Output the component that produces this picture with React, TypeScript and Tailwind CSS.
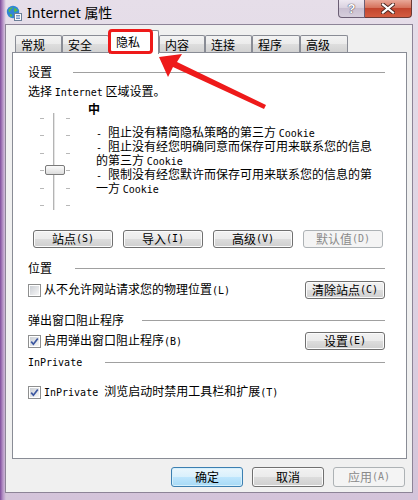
import type { ReactNode } from "react";

const cjk = "font-['Noto_Sans_CJK_SC',sans-serif]";

function M({ children }: { children: ReactNode }) {
  return <span className="font-['DejaVu_Sans_Mono',monospace] text-[10px]">{children}</span>;
}

function Btn({
  children,
  w = "w-[80px]",
  h = "h-[18px]",
  kind = "normal",
  extra = "",
}: {
  children: ReactNode;
  w?: string;
  h?: string;
  kind?: "normal" | "disabled" | "primary";
  extra?: string;
}) {
  const look =
    kind === "disabled"
      ? "border-[#adb2b5] bg-[#f4f4f4] text-[#8a8a8a]"
      : kind === "primary"
        ? "border-[#3c7fb1] bg-[linear-gradient(#eaf6fd_0%,#d9f0fc_50%,#bee6fd_50%,#a7d9f5_100%)] shadow-[inset_0_0_0_1px_#d6f0fc] text-black"
        : "border-[#707070] bg-[linear-gradient(#f2f2f2_0%,#ebebeb_50%,#dddddd_50%,#cfcfcf_100%)] shadow-[inset_0_0_0_1px_#fbfbfb] text-black";
  return (
    <div
      className={`${w} ${h} ${look} ${extra} flex shrink-0 items-center justify-center rounded-[3px] border text-[12px] leading-[12px]`}
    >
      {children}
    </div>
  );
}

function Check({ checked }: { checked?: boolean }) {
  return (
    <span className="flex h-[13px] w-[13px] shrink-0 border border-[#8e8f8f] bg-white p-px">
      <span className="flex flex-1 items-center justify-center bg-[linear-gradient(135deg,#cbcfd5,#f7f7f7)]">
        {checked && (
          <svg width="9" height="9" viewBox="0 0 9 9">
            <path d="M1.2 4.6 L3.4 7.2 L7.8 1.4" fill="none" stroke="#3c57a0" strokeWidth="1.7" />
          </svg>
        )}
      </span>
    </span>
  );
}

function Group({ title, w, extra = "" }: { title: ReactNode; w: string; extra?: string }) {
  return (
    <div className={`flex h-[12px] items-center ${extra}`}>
      <span className={`${w} shrink-0 leading-[12px]`}>{title}</span>
      <div className="h-px flex-1 bg-[#a0a0a0]" />
    </div>
  );
}

const tabs = [
  { t: "常规", w: "w-[47px]" },
  { t: "安全", w: "w-[47px]" },
  { t: "隐私", w: "w-[50px]", sel: true },
  { t: "内容", w: "w-[46px]" },
  { t: "连接", w: "w-[47px]" },
  { t: "程序", w: "w-[48px]" },
  { t: "高级", w: "w-[48px]" },
];

function Slider() {
  const ticks = ["top-[6px]", "top-[23px]", "top-[41px]", "top-[58px]", "top-[76px]", "top-[93px]"];
  return (
    <div className="relative mt-[9px] ml-[10px] h-[100px] w-[34px] shrink-0">
      <div className="absolute top-px left-[15px] h-[97px] w-[2px] border-l border-[#b4b4b4] bg-[#e4e4e4]" />
      {ticks.map((t) => (
        <div key={t}>
          <div className={`absolute ${t} left-[2px] h-px w-[4px] bg-[#b8b8b8]`} />
          <div className={`absolute ${t} left-[28px] h-px w-[4px] bg-[#b8b8b8]`} />
        </div>
      ))}
      <div className="absolute top-[53px] left-[7px] h-[10px] w-[20px] rounded-[2px] border border-[#7a7a7a] bg-[linear-gradient(#fbfbfb,#dcdcdc)]" />
    </div>
  );
}

export default function App() {
  return (
    <div
      className={`${cjk} relative h-[500px] w-[418px] overflow-hidden bg-[linear-gradient(to_right,#7e4c9c_0px,#b896c8_3px,transparent_6px),linear-gradient(to_bottom,#e6dee9,#ddd1e2_60%,#d4c4da)] text-[12px] text-black`}
    >
      {/* title bar */}
      <div className="flex h-[24px] items-start">
        <svg width="16" height="16" viewBox="0 0 16 16" className="mt-[5px] ml-[6px] shrink-0">
          <circle cx="7" cy="7" r="6.2" fill="#2f86d6" />
          <path d="M2.5 5 Q4 2 7 2.2 Q6 4 4.5 4.6 Q4.8 6.5 3 7.5 Z" fill="#58b947" />
          <path d="M8 3 Q10.5 3 12 5.5 Q10 6 9.2 7.6 Q7.6 6 8 3 Z" fill="#58b947" />
          <path d="M4 9 Q6 8.5 6.5 11 Q5 12.5 3.6 11 Z" fill="#58b947" />
          <rect x="8.5" y="8.5" width="7" height="7" fill="#fbfbfb" stroke="#6c7f98" />
          <path d="M10 10.5 H14 M10 12 H14 M10 13.5 H14" stroke="#4a79b8" strokeWidth="0.8" />
        </svg>
        <span className="mt-[3px] ml-[5px] font-['Noto_Sans',sans-serif] text-[14px] leading-[18px] text-black">
          Internet <span className={cjk}>属性</span>
        </span>
        <div className="ml-auto mr-[6px] flex h-[18px]">
          <div className="flex w-[27px] items-center justify-center rounded-bl-[4px] border border-t-0 border-[#6b5e74] bg-[linear-gradient(#eee8f1,#d8d0de_50%,#c9bfd1_50%,#d6cedc)] font-['Liberation_Sans',sans-serif] text-[13px] leading-[13px] font-bold text-white [text-shadow:0_0_1px_#3c3344,0_0_1px_#3c3344]">
            ?
          </div>
          <div className="flex w-[47px] items-center justify-center rounded-br-[4px] border border-t-0 border-l-0 border-[#6b3a34] bg-[linear-gradient(#e9a899,#d6725c_45%,#c2452e_50%,#d45b3f)]">
            <svg width="14" height="11" viewBox="0 0 14 11">
              <path d="M2 1.5 L12 9.5 M12 1.5 L2 9.5" stroke="#4a2620" strokeWidth="4" strokeLinecap="square" />
              <path d="M2 1.5 L12 9.5 M12 1.5 L2 9.5" stroke="#ffffff" strokeWidth="2.2" strokeLinecap="square" />
            </svg>
          </div>
        </div>
      </div>

      {/* client area */}
      <div className="ml-[5px] flex h-[469px] w-[408px] flex-col border border-[#8d8497] bg-[#f0f0f0]">
        <div className="mt-[5px] flex h-[22px] items-end pl-[9px]">
          {tabs.map((tab) =>
            tab.sel ? (
              <div
                key={tab.t}
                className={`${tab.w} relative z-10 -mb-[2px] h-[24px] shrink-0 rounded-t-[2px] border border-b-0 border-[#898c95] bg-white pt-[3px] pl-[6px] leading-[16px]`}
              >
                {tab.t}
                <div className="absolute top-[-2px] left-[-2px] h-[25px] w-[45px] rounded-[4px] border-[3px] border-[#ee1a1a]" />
              </div>
            ) : (
              <div
                key={tab.t}
                className={`${tab.w} h-[17px] shrink-0 rounded-t-[2px] border border-b-0 border-[#898c95] bg-[linear-gradient(#f3f3f3_0%,#ebebeb_50%,#dedede_50%,#d2d2d2_100%)] pl-[5px] leading-[17px]`}
              >
                {tab.t}
              </div>
            ),
          )}
        </div>

        <div className="ml-[6px] flex h-[407px] w-[395px] flex-col border border-[#898c95] bg-white pt-[13px] pr-[21px] pl-[15px]">
          <Group title="设置" w="w-[45px]" />
          <div className="mt-[7px] h-[12px] leading-[12px]">
            选择 <M>Internet</M> 区域设置。
          </div>

          <div className="mt-[6px] flex h-[109px]">
            <Slider />
            <div className="ml-[16px] flex flex-col">
              <div className="h-[12px] leading-[12px] font-bold">中</div>
              <div className="mt-[11px] ml-[8px] leading-[12px] whitespace-nowrap">
                <div>
                  <M>- </M>阻止没有精简隐私策略的第三方 <M>Cookie</M>
                </div>
                <div>
                  <M>- </M>阻止没有经您明确同意而保存可用来联系您的信息
                </div>
                <div>
                  的第三方 <M>Cookie</M>
                </div>
                <div>
                  <M>- </M>限制没有经您默许而保存可用来联系您的信息的第
                </div>
                <div>
                  一方 <M>Cookie</M>
                </div>
              </div>
            </div>
          </div>

          <div className="mt-[18px] ml-[5px] flex gap-[10px]">
            <Btn>
              站点<M>(S)</M>
            </Btn>
            <Btn>
              导入<M>(I)</M>
            </Btn>
            <Btn>
              高级<M>(V)</M>
            </Btn>
            <Btn kind="disabled">
              默认值<M>(D)</M>
            </Btn>
          </div>

          <Group title="位置" w="w-[47px]" extra="mt-[14px]" />
          <div className="mt-[7px] flex h-[18px] items-center">
            <Check />
            <span className="ml-[3px] leading-[12px]">
              从不允许网站请求您的物理位置<M>(L)</M>
            </span>
            <Btn extra="ml-auto">
              清除站点<M>(C)</M>
            </Btn>
          </div>

          <Group title="弹出窗口阻止程序" w="w-[114px]" extra="mt-[15px]" />
          <div className="mt-[6px] flex h-[18px] items-center">
            <Check checked />
            <span className="ml-[3px] leading-[12px]">
              启用弹出窗口阻止程序<M>(B)</M>
            </span>
            <Btn extra="ml-auto">
              设置<M>(E)</M>
            </Btn>
          </div>

          <Group title={<M>InPrivate</M>} w="w-[77px]" extra="mt-[6px]" />
          <div className="mt-[15px] flex h-[18px] items-center">
            <Check checked />
            <span className="ml-[3px] leading-[12px]">
              <M>InPrivate </M>浏览启动时禁用工具栏和扩展<M>(T)</M>
            </span>
          </div>
        </div>

        <div className="mt-[8px] flex justify-end gap-[9px] pr-[7px]">
          <Btn w="w-[72px]" h="h-[20px]" kind="primary">
            确定
          </Btn>
          <Btn w="w-[72px]" h="h-[20px]">
            取消
          </Btn>
          <Btn w="w-[72px]" h="h-[20px]" kind="disabled">
            应用<M>(A)</M>
          </Btn>
        </div>
      </div>

      {/* red arrow annotation */}
      <svg className="pointer-events-none absolute top-0 left-0 z-20" width="418" height="500" viewBox="0 0 418 500">
        <polygon
          points="159,57 182,54 177,62 266,105 264,109 173,67 168,77"
          fill="#ee1a1a"
        />
      </svg>
    </div>
  );
}
